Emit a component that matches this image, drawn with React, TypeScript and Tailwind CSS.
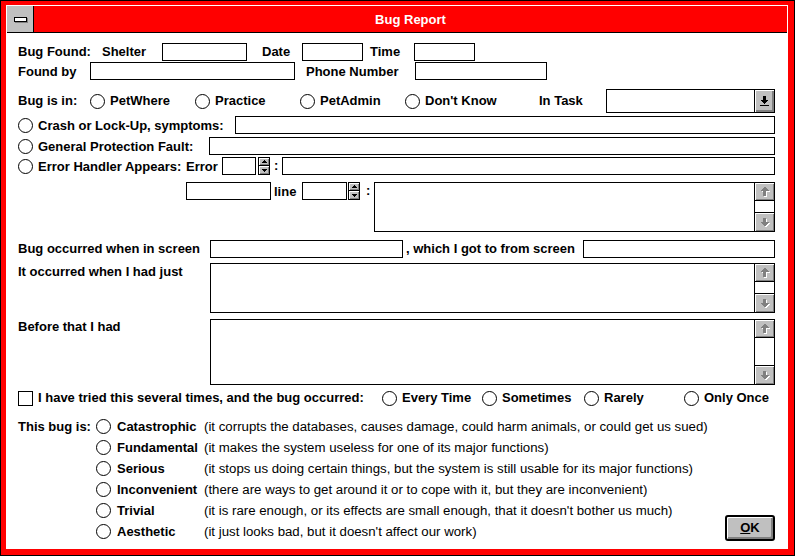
import React from 'react';

const bevel = 'shadow-[inset_1px_1px_0_#fff,inset_-1px_-1px_0_#808080]';

const Radio: React.FC = () => (
    <span className="inline-block h-[15px] w-[15px] shrink-0 rounded-full border border-black bg-white" />
);

const Box: React.FC<{ className?: string }> = ({ className = '' }) => (
    <div className={`h-[18px] shrink-0 border border-black bg-white ${className}`} />
);

const ScrollBtn: React.FC<{ down?: boolean }> = ({ down }) => (
    <div
        className={`flex items-center justify-center bg-[#c0c0c0] ${bevel} ${
            down ? 'h-[19px] border-t border-black' : 'h-[18px] border-b border-black'
        }`}
    >
        <svg width="11" height="11" viewBox="0 0 11 11" shapeRendering="crispEdges">
            {down ? (
                <>
                    <path d="M5 2H8V6H11L6.5 10.5L2 6H5Z" fill="#fff" />
                    <path d="M4 1H7V5H10L5.5 9.5L1 5H4Z" fill="#808080" />
                </>
            ) : (
                <>
                    <path d="M6.5 1.5L11 6H8V11H5V6H2Z" fill="#fff" />
                    <path d="M5.5 0.5L10 5H7V10H4V5H1Z" fill="#808080" />
                </>
            )}
        </svg>
    </div>
);

const Memo: React.FC<{ className: string }> = ({ className }) => (
    <div className={`flex flex-1 border border-black bg-white ${className}`}>
        <div className="flex-1" />
        <div className="flex w-[20px] flex-col border-l border-black">
            <ScrollBtn />
            <div className="flex-1" />
            <ScrollBtn down />
        </div>
    </div>
);

const Spin: React.FC = () => (
    <div className="flex h-[18px] w-[12px] shrink-0 flex-col border border-black">
        <div className={`flex h-[8px] items-center justify-center border-b border-black bg-[#c0c0c0] ${bevel}`}>
            <svg width="6" height="3" viewBox="0 0 6 3" shapeRendering="crispEdges">
                <path d="M3 0L6 3H0Z" />
            </svg>
        </div>
        <div className={`flex flex-1 items-center justify-center bg-[#c0c0c0] ${bevel}`}>
            <svg width="6" height="3" viewBox="0 0 6 3" shapeRendering="crispEdges">
                <path d="M0 0H6L3 3Z" />
            </svg>
        </div>
    </div>
);

const severities: [string, string][] = [
    ['Catastrophic', '(it corrupts the databases, causes damage, could harm animals, or could get us sued)'],
    ['Fundamental', '(it makes the system useless for one of its major functions)'],
    ['Serious', '(it stops us doing certain things, but the system is still usable for its major functions)'],
    ['Inconvenient', '(there are ways to get around it or to cope with it, but they are inconvenient)'],
    ['Trivial', "(it is rare enough, or its effects are small enough, that it doesn't bother us much)"],
    ['Aesthetic', "(it just looks bad, but it doesn't affect our work)"],
];

const App: React.FC = () => {
    return (
        <div className="h-[556px] w-[796px] bg-white font-['Liberation_Sans',Arial,sans-serif] text-[13px] font-bold leading-[16px] whitespace-nowrap text-black">
            <div className="h-[556px] w-[795px] border border-black bg-[#ff0000] pt-[4px] pr-[6px] pb-[6px] pl-[5px]">
                <div className="h-full bg-white p-[1px]">
                    {/* title bar */}
                    <div className="flex h-[27px] border-b border-black">
                        <div className="flex w-[27px] items-center justify-center border-r border-black bg-[#c0c0c0]">
                            <div className="h-[5px] w-[13px] border border-black bg-white shadow-[1px_1px_0_#808080]" />
                        </div>
                        <div className="flex flex-1 items-center justify-center bg-[#ff0000] pt-[1px] text-white">Bug Report</div>
                    </div>

                    <div className="pr-[12px] pl-[11px]">
                        <div className="mt-[9px] flex h-[18px] items-center pt-[1px]">
                            <span className="w-[84px]">Bug Found:</span>
                            <span className="w-[60px]">Shelter</span>
                            <Box className="w-[85px]" />
                            <span className="ml-[15px] w-[40px]">Date</span>
                            <Box className="w-[61px]" />
                            <span className="ml-[7px] w-[44px]">Time</span>
                            <Box className="w-[61px]" />
                        </div>

                        <div className="mt-[2px] flex h-[18px] items-center">
                            <span className="w-[72px] pt-[1px]">Found by</span>
                            <Box className="w-[205px]" />
                            <span className="ml-[11px] w-[109px] pt-[1px]">Phone Number</span>
                            <Box className="w-[132px]" />
                        </div>

                        <div className="mt-[9px] flex h-[24px] items-center">
                            <span className="w-[72px]">Bug is in:</span>
                            {['PetWhere', 'Practice', 'PetAdmin'].map(p => (
                                <div key={p} className="flex w-[105px] items-center">
                                    <Radio />
                                    <span className="ml-[5px]">{p}</span>
                                </div>
                            ))}
                            <div className="flex w-[134px] items-center">
                                <Radio />
                                <span className="ml-[5px]">Don't Know</span>
                            </div>
                            <span className="w-[67px]">In Task</span>
                            <div className="flex h-[24px] flex-1 border border-black bg-white">
                                <div className="flex-1" />
                                <div className="flex w-[20px] items-center justify-center border-l border-black bg-[#c0c0c0] shadow-[inset_1px_1px_0_#fff,inset_-2px_-2px_0_#808080]">
                                    <svg width="9" height="10" viewBox="0 0 9 10" shapeRendering="crispEdges">
                                        <path d="M3 0H6V4H9L4.5 8L0 4H3Z" />
                                        <rect y="9" width="9" height="1" />
                                    </svg>
                                </div>
                            </div>
                        </div>

                        <div className="mt-[3px] flex h-[18px] items-center">
                            <Radio />
                            <span className="ml-[5px] w-[197px] pt-[1px]">Crash or Lock-Up, symptoms:</span>
                            <Box className="flex-1" />
                        </div>

                        <div className="mt-[3px] flex h-[18px] items-center">
                            <Radio />
                            <span className="ml-[5px] w-[171px] pt-[1px]">General Protection Fault:</span>
                            <Box className="flex-1" />
                        </div>

                        <div className="mt-[2px] flex h-[18px] items-center">
                            <Radio />
                            <span className="ml-[5px] w-[148px] pt-[1px]">Error Handler Appears:</span>
                            <span className="w-[36px] pt-[1px]">Error</span>
                            <Box className="w-[34px]" />
                            <div className="ml-[2px]">
                                <Spin />
                            </div>
                            <span className="w-[12px] pl-[4px]">:</span>
                            <Box className="flex-1" />
                        </div>

                        <div className="mt-[7px] flex h-[50px] items-start pl-[168px]">
                            <Box className="w-[85px]" />
                            <span className="flex h-[18px] w-[31px] items-center pt-[1px] pl-[3px]">line</span>
                            <Box className="w-[45px]" />
                            <div className="ml-[1px]">
                                <Spin />
                            </div>
                            <span className="flex h-[18px] w-[14px] items-center pl-[6px]">:</span>
                            <Memo className="h-[50px]" />
                        </div>

                        <div className="mt-[8px] flex h-[18px] items-center">
                            <span className="w-[192px]">Bug occurred when in screen</span>
                            <Box className="w-[193px]" />
                            <span className="w-[180px] pl-[3px]">, which I got to from screen</span>
                            <Box className="flex-1" />
                        </div>

                        <div className="mt-[5px] flex h-[50px] items-start">
                            <span className="w-[192px] pt-[1px]">It occurred when I had just</span>
                            <Memo className="h-[50px]" />
                        </div>

                        <div className="mt-[6px] flex h-[66px] items-start">
                            <span className="w-[192px]">Before that I had</span>
                            <Memo className="h-[66px]" />
                        </div>

                        <div className="mt-[5px] flex h-[16px] items-center">
                            <span className="h-[15px] w-[15px] shrink-0 border border-black bg-white" />
                            <span className="ml-[5px] w-[344px]">I have tried this several times, and the bug occurred:</span>
                            <div className="flex w-[100px] items-center">
                                <Radio />
                                <span className="ml-[5px]">Every Time</span>
                            </div>
                            <div className="flex w-[102px] items-center">
                                <Radio />
                                <span className="ml-[5px]">Sometimes</span>
                            </div>
                            <div className="flex w-[100px] items-center">
                                <Radio />
                                <span className="ml-[5px]">Rarely</span>
                            </div>
                            <div className="flex items-center">
                                <Radio />
                                <span className="ml-[5px]">Only Once</span>
                            </div>
                        </div>

                        <div className="mt-[10px] flex items-end">
                            <div className="flex">
                                <span className="flex h-[21px] w-[78px] items-center">This bug is:</span>
                                <div className="flex flex-col">
                                    {severities.map(([name, desc]) => (
                                        <div key={name} className="flex h-[21px] items-center">
                                            <Radio />
                                            <span className="ml-[6px] w-[87px]">{name}</span>
                                            <span className="text-[13.25px] font-normal">{desc}</span>
                                        </div>
                                    ))}
                                </div>
                            </div>
                            <div className="mb-[1px] ml-auto flex h-[26px] w-[50px] items-center justify-center rounded-[3px] border-2 border-black bg-[#c0c0c0] shadow-[inset_1px_1px_0_#fff,inset_-2px_-2px_0_#808080]">
                                <span>
                                    <span className="underline">O</span>K
                                </span>
                            </div>
                        </div>
                    </div>
                </div>
            </div>
        </div>
    );
};

export default App;
